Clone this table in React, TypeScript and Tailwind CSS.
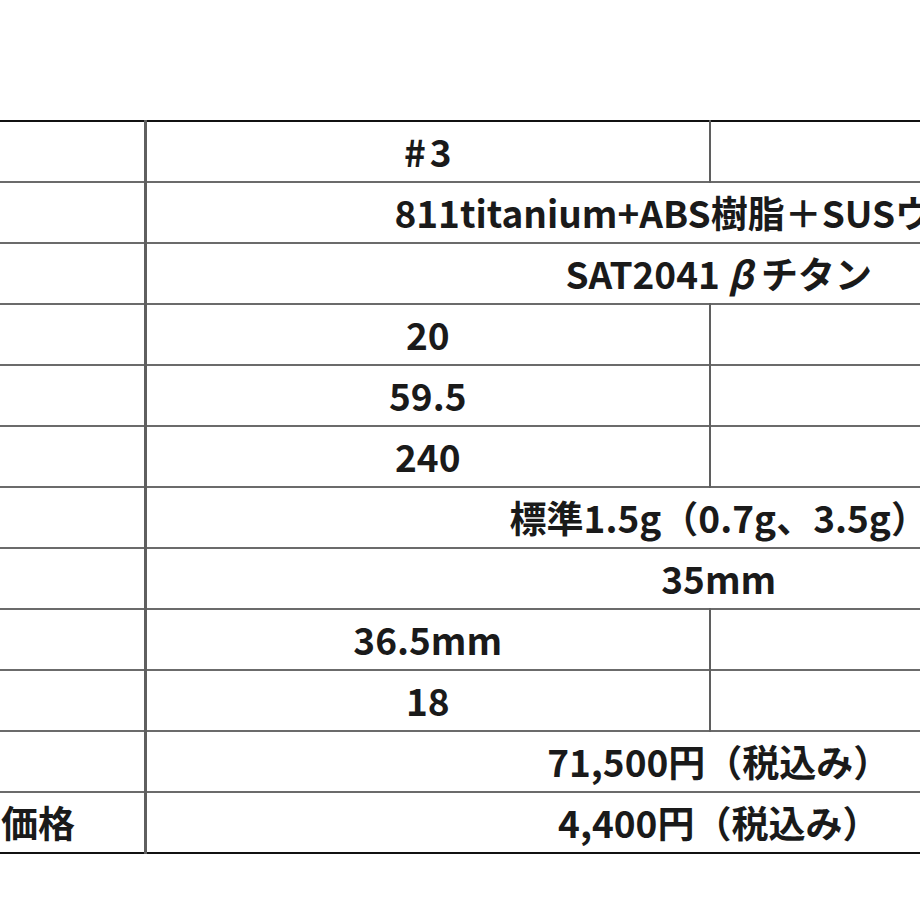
import React from 'react';

type Row = {
  label: string;
  value: React.ReactNode;
  split?: boolean;
};

// split → value sits in the first of two columns, otherwise the cell spans both
const rows: Row[] = [
  {
    label: '',
    value: (
      <>
        #<span className="ml-[4px]">3</span>
      </>
    ),
    split: true,
  },
  { label: '', value: '811titanium+ABS樹脂＋SUSウェイト' },
  {
    label: '',
    value: (
      <>
        SAT2041 <span className="italic mr-[8px]">β</span>チタン
      </>
    ),
  },
  { label: '', value: '20', split: true },
  { label: '', value: '59.5', split: true },
  { label: '', value: '240', split: true },
  { label: '', value: '標準1.5g（0.7g、3.5g）' },
  { label: '', value: '35mm' },
  { label: '', value: '36.5mm', split: true },
  { label: '', value: '18', split: true },
  { label: '', value: '71,500円（税込み）' },
  { label: '価格', value: '4,400円（税込み）' },
];

const App: React.FC = () => {
  return (
    <div
      className="w-[920px] h-[920px] overflow-hidden bg-white pt-[120px] text-[#1a1a1a]"
      style={{ fontFamily: '"Noto Sans CJK JP", "Noto Sans", sans-serif' }}
    >
      <table className="w-[1291px] border-collapse table-fixed text-[37px] font-semibold leading-none">
        <colgroup>
          <col className="w-[145px]" />
          <col className="w-[565px]" />
          <col className="w-[581px]" />
        </colgroup>
        <tbody className="border-y-2 border-[#111]">
          {rows.map(({ label, value, split }, idx) => (
            <tr key={idx} className="h-[61px] border-b-2 border-[#6b6b6b] last:border-[#111]">
              <td className="pl-[1px] whitespace-nowrap border-r-[3px] border-[#5f5f5f]">{label}</td>
              {split ? (
                <>
                  <td className="text-center whitespace-nowrap border-r-2 border-[#5f5f5f]">{value}</td>
                  <td />
                </>
              ) : (
                <td colSpan={2} className="text-center whitespace-nowrap">
                  {value}
                </td>
              )}
            </tr>
          ))}
        </tbody>
      </table>
    </div>
  );
};

export default App;
